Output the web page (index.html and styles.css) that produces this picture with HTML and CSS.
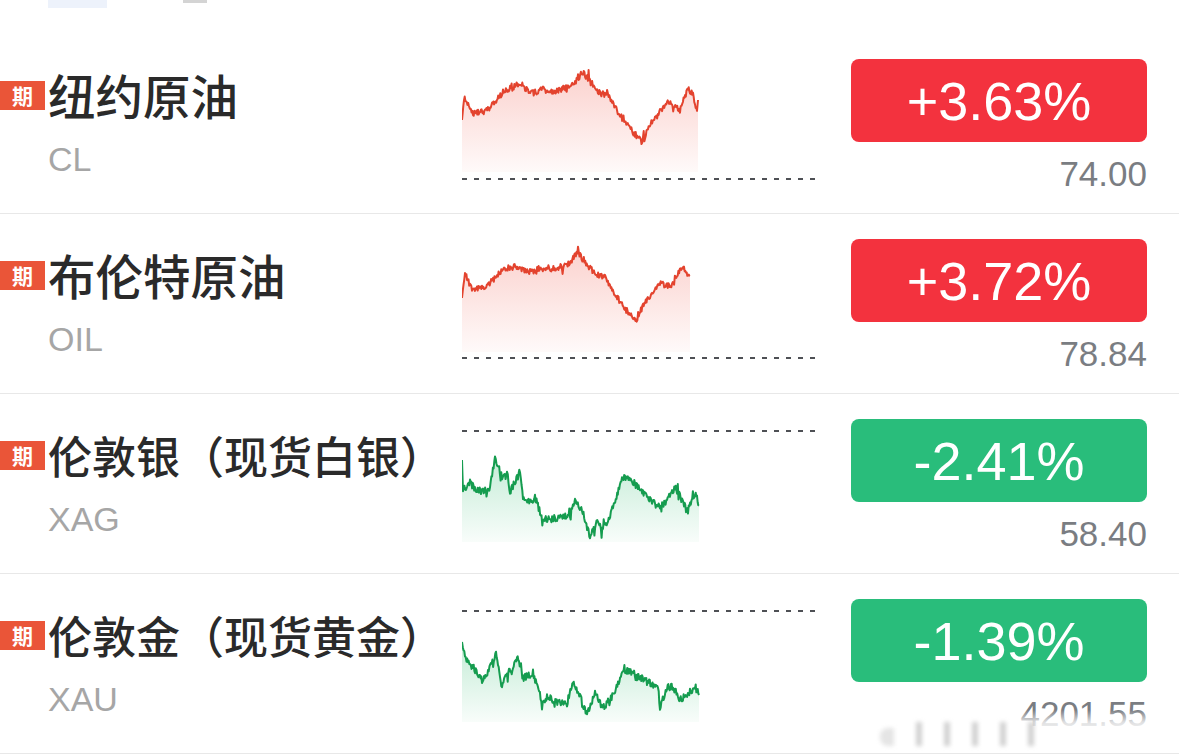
FILE: index.html
```html
<!DOCTYPE html>
<html>
<head>
  <meta charset="utf-8">
  <title>行情</title>
  <link rel="stylesheet" href="styles.css">
</head>
<meta name="viewport" content="width=device-width, initial-scale=1.0">
<body>
  <div class="tabs-edge">
    <span class="tab-edge tab-edge-active"></span>
    <span class="tab-edge tab-edge-muted"></span>
  </div>

  <ul class="quote-list">
    <li class="quote-row">
      <div class="quote-info">
        <div class="quote-title"><span class="tag">期</span><span class="name">纽约原油</span></div>
        <div class="code">CL</div>
      </div>
      <svg class="spark" id="spark-cl" viewBox="0 0 355 180" width="355" height="180"></svg>
      <div class="quote-change">
        <div class="pill up">+3.63%</div>
        <div class="price">74.00</div>
      </div>
    </li>

    <li class="quote-row">
      <div class="quote-info">
        <div class="quote-title"><span class="tag">期</span><span class="name">布伦特原油</span></div>
        <div class="code">OIL</div>
      </div>
      <svg class="spark" id="spark-oil" viewBox="0 0 355 180" width="355" height="180"></svg>
      <div class="quote-change">
        <div class="pill up">+3.72%</div>
        <div class="price">78.84</div>
      </div>
    </li>

    <li class="quote-row">
      <div class="quote-info">
        <div class="quote-title"><span class="tag">期</span><span class="name name-long">伦敦银（现货白银）</span></div>
        <div class="code">XAG</div>
      </div>
      <svg class="spark" id="spark-xag" viewBox="0 0 355 180" width="355" height="180"></svg>
      <div class="quote-change">
        <div class="pill down">-2.41%</div>
        <div class="price">58.40</div>
      </div>
    </li>

    <li class="quote-row">
      <div class="quote-info">
        <div class="quote-title"><span class="tag">期</span><span class="name name-long">伦敦金（现货黄金）</span></div>
        <div class="code">XAU</div>
      </div>
      <svg class="spark" id="spark-xau" viewBox="0 0 355 180" width="355" height="180"></svg>
      <div class="quote-change">
        <div class="pill down">-1.39%</div>
        <div class="price">4201.55</div>
      </div>
      <div class="watermark"><i></i><i></i><i></i><i></i><i></i><i></i></div>
    </li>
  </ul>

  <script>
    // intraday sketch: key points (x, y inside the row), prev close line, fill floor
    const charts = {
      'spark-cl': {
        trend: 'up', base: 145, floor: 138, seed: 11, noise: 6,
        points: [[0,86],[2,64],[11,79],[21,78],[28,74],[41,58],[56,51],[71,59],[81,55],[88,59],[111,51],
          [121,38],[128,48],[138,59],[148,63],[153,74],[165,89],[173,101],[181,108],[188,91],[198,78],
          [205,68],[218,76],[226,54],[231,61],[235,79],[236,66]]
      },
      'spark-oil': {
        trend: 'up', base: 144, floor: 138, seed: 29, noise: 6,
        points: [[0,84],[3,60],[10,76],[20,74],[27,70],[40,56],[54,52],[68,58],[78,54],[85,57],[107,50],
          [116,38],[124,50],[134,60],[143,63],[148,73],[160,90],[167,100],[174,106],[181,92],[190,80],
          [198,70],[210,72],[220,52],[224,58],[228,62]]
      },
      'spark-xag': {
        trend: 'down', base: 37, floor: 148, seed: 5, noise: 7,
        points: [[0,66],[1,96],[8,89],[15,96],[21,98],[28,93],[33,64],[40,83],[45,81],[48,99],[58,76],
          [61,106],[70,109],[73,103],[81,126],[95,124],[108,121],[113,106],[120,116],[128,143],[136,126],
          [141,136],[151,114],[160,84],[168,84],[178,96],[188,106],[198,114],[205,106],[213,94],[220,106],
          [226,116],[233,99],[237,111]]
      },
      'spark-xau': {
        trend: 'down', base: 37, floor: 148, seed: 17, noise: 7,
        points: [[0,68],[3,84],[11,93],[20,106],[26,99],[34,79],[40,114],[45,99],[51,96],[55,83],[61,104],
          [71,99],[80,128],[85,123],[96,128],[105,129],[111,106],[118,123],[125,141],[133,119],[141,134],
          [151,121],[161,96],[170,98],[185,108],[196,113],[198,134],[205,113],[211,113],[218,126],
          [233,113],[237,121]]
      }
    };

    const colors = {
      up: { line: '#e3432e', fill: '241, 90, 76' },
      down: { line: '#159c4f', fill: '43, 186, 108' }
    };

    // small seeded random so the lines come out the same every load
    function seeded(seed) {
      return function() {
        seed |= 0; seed = seed + 0x6D2B79F5 | 0;
        let t = Math.imul(seed ^ seed >>> 15, 1 | seed);
        t = t + Math.imul(t ^ t >>> 7, 61 | t) ^ t;
        return ((t ^ t >>> 14) >>> 0) / 4294967296;
      };
    }

    function buildLine(chart) {
      const rand = seeded(chart.seed);
      const pts = chart.points;
      const out = [];
      for (let i = 0; i < pts.length - 1; i++) {
        const [x0, y0] = pts[i];
        const [x1, y1] = pts[i + 1];
        const steps = Math.max(1, Math.round((x1 - x0) / 0.7));
        for (let s = 0; s < steps; s++) {
          const t = s / steps;
          let y = y0 + (y1 - y0) * t;
          if (i > 0 || s > 0) {
            y += (rand() - 0.5) * chart.noise;
            // the odd tick that jumps further
            if (rand() < 0.07) y += (rand() - 0.5) * chart.noise * 2.5;
          }
          out.push([x0 + (x1 - x0) * t, y]);
        }
      }
      out.push(pts[pts.length - 1]);
      return out;
    }

    Object.keys(charts).forEach((id) => {
      const chart = charts[id];
      const svg = document.getElementById(id);
      const c = colors[chart.trend];
      const line = buildLine(chart);
      const d = line.map((p, i) => (i ? 'L' : 'M') + p[0].toFixed(1) + ' ' + p[1].toFixed(1)).join(' ');
      const last = line[line.length - 1];
      const top = Math.min.apply(null, line.map((p) => p[1]));

      svg.innerHTML =
        '<defs><linearGradient id="' + id + '-fill" gradientUnits="userSpaceOnUse" x1="0" y1="' + top + '" x2="0" y2="' + chart.floor + '">' +
        '<stop offset="0" stop-color="rgba(' + c.fill + ', 0.28)"/>' +
        '<stop offset="1" stop-color="rgba(' + c.fill + ', 0.03)"/>' +
        '</linearGradient></defs>' +
        '<path d="' + d + ' L' + last[0] + ' ' + chart.floor + ' L0 ' + chart.floor + ' Z" fill="url(#' + id + '-fill)"/>' +
        '<line x1="0" y1="' + chart.base + '" x2="355" y2="' + chart.base + '" stroke="#4e5055" stroke-width="2" stroke-dasharray="5 7"/>' +
        '<path d="' + d + '" fill="none" stroke="' + c.line + '" stroke-width="2" stroke-linejoin="round"/>';
    });
  </script>
</body>
</html>
```

FILE: styles.css
```css
body {
  margin: 0;
  background-color: #ffffff;
  font-family: "Liberation Sans", "Noto Sans CJK SC", sans-serif;
  overflow: hidden;
}

.tabs-edge {
  display: flex;
  align-items: flex-start;
  height: 34px;
  padding-left: 48px;
}

.tab-edge {
  display: block;
}

.tab-edge-active {
  width: 59px;
  height: 8px;
  background-color: #edf2fb;
}

.tab-edge-muted {
  width: 24px;
  height: 3px;
  margin-left: 76px;
  background-color: #d4d4d4;
}

.quote-list {
  list-style: none;
  margin: 0;
  padding: 0;
}

.quote-row {
  position: relative;
  display: grid;
  grid-template-columns: 462px 355px 1fr;
  height: 179px;
  border-bottom: 1px solid #e8e8e8;
}

.quote-info {
  display: flex;
  flex-direction: column;
  padding-top: 33px;
}

.quote-title {
  display: flex;
  align-items: center;
  height: 56px;
}

.tag {
  width: 45px;
  height: 29px;
  margin-right: 3px;
  background-color: #ea5538;
  color: #fff;
  font-family: "Noto Sans CJK SC", sans-serif;
  font-weight: 700;
  font-size: 21px;
  line-height: 29px;
  text-align: center;
}

.name {
  font-family: "Noto Sans CJK SC", sans-serif;
  font-weight: 500;
  font-size: 47.5px;
  line-height: 56px;
  color: #2a2a2a;
  white-space: nowrap;
}

.name-long {
  font-size: 44px;
}

.code {
  margin-top: 16px;
  padding-left: 48px;
  font-size: 34px;
  line-height: 40px;
  color: #a6a6a6;
}

.spark {
  display: block;
}

.quote-change {
  display: flex;
  flex-direction: column;
  align-items: flex-end;
  padding: 25px 32px 0 34px;
}

.pill {
  display: flex;
  align-items: center;
  justify-content: center;
  width: 296px;
  height: 83px;
  border-radius: 8px;
  color: #fff;
  font-size: 54px;
}

.pill.up {
  background-color: #f3323e;
}

.pill.down {
  background-color: #29bd7b;
}

.price {
  margin-top: 12px;
  font-size: 35px;
  line-height: 40px;
  color: #7a7d82;
}

/* share stamp laid over the last price */
.watermark {
  position: absolute;
  left: 874px;
  top: 136px;
  width: 300px;
  height: 40px;
  display: flex;
  align-items: flex-end;
  gap: 22px;
  padding: 0 0 4px 6px;
  box-sizing: border-box;
  background: linear-gradient(to bottom, rgba(255, 255, 255, 0) 0, rgba(255, 255, 255, 0.75) 30%, #fff 60%);
}

.watermark i {
  display: block;
  width: 6px;
  height: 24px;
  background-color: rgba(140, 140, 140, 0.4);
  filter: blur(2px);
}

.watermark i:first-child {
  width: 14px;
  height: 18px;
  border-radius: 8px 0 0 8px;
  background-color: rgba(190, 190, 190, 0.4);
}
```
